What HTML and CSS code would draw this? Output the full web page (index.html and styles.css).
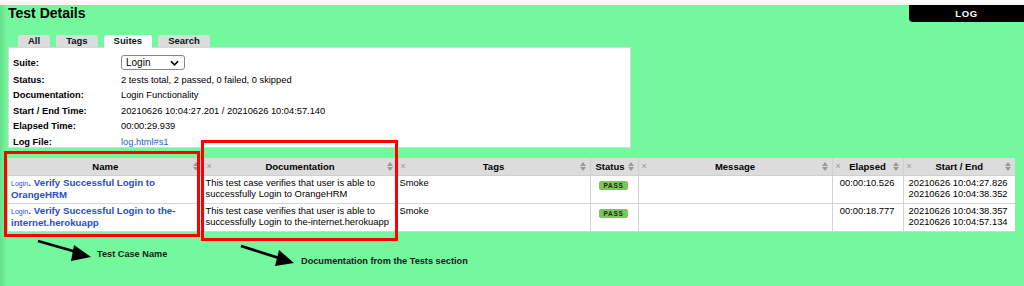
FILE: index.html
```html
<!DOCTYPE html>
<html>
<head>
<meta charset="utf-8">
<link rel="stylesheet" href="styles.css">
</head>
<body>
<div class="topstrip"></div>
<div class="header">
  <h1 class="title">Test Details</h1>
  <div class="logtab">LOG</div>
</div>
<div class="tabs">
  <div class="tab">All</div>
  <div class="tab">Tags</div>
  <div class="tab active">Suites</div>
  <div class="tab">Search</div>
</div>
<div class="details">
  <table class="info">
    <tr class="suite-row"><th>Suite:</th><td><span class="select">Login<svg class="chev" viewBox="0 0 10 6" width="9" height="6"><path d="M1 1 L5 5 L9 1" fill="none" stroke="#000" stroke-width="1.8"/></svg></span></td></tr>
    <tr><th>Status:</th><td>2 tests total, 2 passed, 0 failed, 0 skipped</td></tr>
    <tr><th>Documentation:</th><td>Login Functionality</td></tr>
    <tr><th>Start / End Time:</th><td>20210626 10:04:27.201 / 20210626 10:04:57.140</td></tr>
    <tr><th>Elapsed Time:</th><td>00:00:29.939</td></tr>
    <tr><th>Log File:</th><td><a class="link">log.html#s1</a></td></tr>
  </table>
</div>
<table class="tests">
  <colgroup>
    <col class="c-name"><col class="c-doc"><col class="c-tags"><col class="c-status"><col class="c-msg"><col class="c-el"><col class="c-se">
  </colgroup>
  <thead>
    <tr>
      <th><span class="hd">Name</span><span class="sort"><svg viewBox="0 0 6 9" width="6" height="9"><path d="M0 4 L3 0 L6 4Z M0 5 L3 9 L6 5Z" fill="#999"/></svg></span></th>
      <th><span class="x">×</span><span class="hd">Documentation</span><span class="sort"><svg viewBox="0 0 6 9" width="6" height="9"><path d="M0 4 L3 0 L6 4Z M0 5 L3 9 L6 5Z" fill="#999"/></svg></span></th>
      <th><span class="x">×</span><span class="hd">Tags</span><span class="sort"><svg viewBox="0 0 6 9" width="6" height="9"><path d="M0 4 L3 0 L6 4Z M0 5 L3 9 L6 5Z" fill="#999"/></svg></span></th>
      <th class="st"><span class="hd">Status</span><span class="sort"><svg viewBox="0 0 6 9" width="6" height="9"><path d="M0 4 L3 0 L6 4Z M0 5 L3 9 L6 5Z" fill="#999"/></svg></span></th>
      <th><span class="x">×</span><span class="hd">Message</span><span class="sort"><svg viewBox="0 0 6 9" width="6" height="9"><path d="M0 4 L3 0 L6 4Z M0 5 L3 9 L6 5Z" fill="#999"/></svg></span></th>
      <th><span class="x">×</span><span class="hd">Elapsed</span><span class="sort"><svg viewBox="0 0 6 9" width="6" height="9"><path d="M0 4 L3 0 L6 4Z M0 5 L3 9 L6 5Z" fill="#999"/></svg></span></th>
      <th><span class="x">×</span><span class="hd">Start / End</span><span class="sort"><svg viewBox="0 0 6 9" width="6" height="9"><path d="M0 4 L3 0 L6 4Z M0 5 L3 9 L6 5Z" fill="#999"/></svg></span></th>
    </tr>
  </thead>
  <tbody>
    <tr>
      <td class="name"><span class="parent">Login</span>.<a class="tname">Verify Successful Login to OrangeHRM</a></td>
      <td>This test case verifies that user is able to successfully Login to OrangeHRM</td>
      <td>Smoke</td>
      <td class="status"><span class="pass">PASS</span></td>
      <td></td>
      <td class="el">00:00:10.526</td>
      <td class="se">20210626 10:04:27.826<br>20210626 10:04:38.352</td>
    </tr>
    <tr>
      <td class="name"><span class="parent">Login</span>.<a class="tname">Verify Successful Login to the-internet.herokuapp</a></td>
      <td>This test case verifies that user is able to successfully Login to the-internet.herokuapp</td>
      <td>Smoke</td>
      <td class="status"><span class="pass">PASS</span></td>
      <td></td>
      <td class="el">00:00:18.777</td>
      <td class="se">20210626 10:04:38.357<br>20210626 10:04:57.134</td>
    </tr>
  </tbody>
</table>

<div class="redbox box1"></div>
<div class="redbox box2"></div>
<svg class="arrows" width="1024" height="286" viewBox="0 0 1024 286">
  <line x1="38" y1="241" x2="80" y2="253" stroke="#000" stroke-width="2.8"/>
  <polygon points="91,257 74,245 71,261" fill="#000"/>
  <line x1="241" y1="246" x2="282" y2="259" stroke="#000" stroke-width="2.8"/>
  <polygon points="294,263 279,250 275,266" fill="#000"/>
</svg>
<div class="note note1">Test Case Name</div>
<div class="note note2">Documentation from the Tests section</div>
</body>
</html>
```

FILE: styles.css
```css
html, body {
  margin: 0;
  padding: 0;
}
body {
  background: linear-gradient(to right, #66df8b 0, #74f89d 7px) #74f89d;
  font-family: "Liberation Sans", Arial, sans-serif;
  color: #000;
  width: 1024px;
  height: 286px;
  overflow: hidden;
  position: relative;
}
.topstrip {
  height: 5px;
  background: linear-gradient(to bottom, #ffffff 0, #f4f4f4 100%);
}
.header {
  display: flex;
  justify-content: space-between;
  align-items: flex-start;
  height: 17px;
}
.title {
  margin: 0 0 0 8px;
  font-size: 14px;
  line-height: 17px;
  font-weight: bold;
}
.logtab {
  width: 115px;
  height: 17px;
  background: #000;
  color: #fff;
  font-size: 9.5px;
  font-weight: bold;
  letter-spacing: 0.6px;
  text-align: center;
  line-height: 17px;
  border-bottom-left-radius: 4px;
}
.tabs {
  display: flex;
  gap: 6px;
  padding-left: 18px;
  margin-top: 13px;
  height: 12px;
}
.tab {
  background: #dcdcdc;
  font-size: 9.5px;
  font-weight: bold;
  line-height: 12px;
  height: 12px;
  padding: 0 10px;
  border-radius: 2px 2px 0 0;
  color: #111;
}
.tab.active {
  background: #fff;
  height: 13px;
}
.details {
  margin-left: 8px;
  width: 623px;
  height: 101px;
  box-sizing: border-box;
  background: #fff;
  border: 1px solid #d8d8d8;
  padding: 5px 0 0 3px;
}
.info {
  border-collapse: collapse;
  font-size: 9.3px;
}
.info th {
  text-align: left;
  font-weight: bold;
  width: 108px;
  padding: 0 0 0 1px;
  height: 15.5px;
  line-height: 12px;
}
.info td {
  padding: 0;
  height: 15.5px;
  line-height: 12px;
}
.info .suite-row th, .info .suite-row td {
  height: 19px;
}
.select {
  display: inline-flex;
  align-items: center;
  justify-content: space-between;
  box-sizing: border-box;
  width: 64px;
  height: 15px;
  border: 1px solid #888;
  border-radius: 3px;
  padding: 0 5px 0 4px;
  font-size: 10px;
  background: #fff;
}
.link {
  color: #2a5ccf;
}
.tests {
  margin: 10px 0 0 8px;
  width: 1007px;
  table-layout: fixed;
  border-collapse: collapse;
  background: #fff;
  font-size: 9.4px;
}
.c-name { width: 195px; }
.c-doc { width: 194px; }
.c-tags { width: 193px; }
.c-status { width: 48px; }
.c-msg { width: 194px; }
.c-el { width: 71px; }
.c-se { width: 112px; }
.tests th {
  background: #dcdcdc;
  height: 17px;
  padding: 0 3px;
  font-weight: bold;
  font-size: 9.5px;
  position: relative;
  border: 1px solid #cfcfcf;
  border-top: none;
  text-align: center;
  box-sizing: border-box;
  white-space: nowrap;
}
.tests th .x {
  position: absolute;
  left: 3px;
  top: 3px;
  color: #999;
  font-weight: normal;
  font-size: 9px;
}
.tests th .sort {
  position: absolute;
  right: 4px;
  top: 4px;
  line-height: 0;
}
.tests th.st {
  text-align: left;
  padding-left: 5px;
}
.tests td {
  border: 1px solid #d4d4d4;
  height: 28px;
  vertical-align: top;
  padding: 1px 3px 0 2px;
  line-height: 11px;
  box-sizing: border-box;
}
.tests tr td:first-child, .tests tr th:first-child { border-left: none; }
.tests tr td:last-child, .tests tr th:last-child { border-right: none; }
.tests td.name {
  font-size: 9.7px;
  padding-left: 3px;
  padding-top: 1px;
  color: #2a4ec8;
  font-weight: bold;
}
.parent {
  font-size: 7px;
  font-weight: normal;
  color: #2a4ec8;
}
.tname {
  color: #2a4ec8;
  font-weight: bold;
  margin-left: 3px;
}
.tests td.status {
  text-align: center;
  padding-top: 3px;
}
.pass {
  display: inline-block;
  background: #7ac55c;
  color: #1c2a14;
  font-size: 6.5px;
  font-weight: bold;
  letter-spacing: 0.7px;
  padding: 0 4px;
  line-height: 9px;
  border-radius: 2px;
}
.tests td.el {
  text-align: right;
  padding-right: 8px;
}
.tests td.se {
  padding-left: 5px;
}
.redbox {
  position: absolute;
  border: 3px solid #f00;
  box-sizing: border-box;
}
.box1 {
  left: 4px;
  top: 151px;
  width: 196px;
  height: 86px;
}
.box2 {
  left: 201px;
  top: 140px;
  width: 197px;
  height: 101px;
}
.arrows {
  position: absolute;
  left: 0;
  top: 0;
  pointer-events: none;
}
.note {
  position: absolute;
  font-size: 9.2px;
  font-weight: bold;
  color: #1a1a1a;
}
.note1 {
  left: 97px;
  top: 249px;
}
.note2 {
  left: 301px;
  top: 256px;
}
```
